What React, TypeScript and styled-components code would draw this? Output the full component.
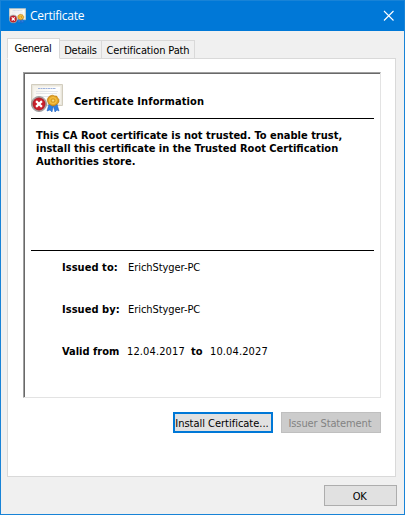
import React from "react";
import styled, { createGlobalStyle } from "styled-components";

const Global = createGlobalStyle`
  *, *::before, *::after { box-sizing: border-box; }
  body { margin: 0; font: 11px/13px "DejaVu Sans Condensed", "DejaVu Sans", sans-serif; font-stretch: condensed; color: #000; }
  button { font: inherit; font-stretch: inherit; color: inherit; }
`;

const Dialog = styled.main`
  width: 405px;
  height: 515px;
  border: 1px solid #1883d7;
  background: #f0f0f0;
  display: flex;
  flex-direction: column;
  overflow: hidden;
`;

const TitleBar = styled.header`
  height: 30px;
  flex: none;
  background: #0078d7;
  color: #fff;
  display: flex;
  align-items: center;
  padding: 0 9px 0 8px;
`;

const Title = styled.h1`
  flex: 1;
  margin: 0 0 0 4px;
  font: 400 12px/16px "Open Sans", "Noto Sans", sans-serif;
  letter-spacing: -0.25px;
`;

const CloseButton = styled.button`
  border: 0;
  padding: 0;
  background: none;
  display: flex;
  width: 12px;
  height: 12px;
`;

const Tabs = styled.nav`
  display: flex;
  align-items: flex-end;
  height: 21px;
  margin: 7px 0 -1px 6px;
  flex: none;
`;

const Tab = styled.button<{ $active?: boolean; $width: number }>`
  width: ${(p) => p.$width}px;
  height: ${(p) => (p.$active ? 21 : 19)}px;
  border: 1px solid #d9d9d9;
  border-left-width: ${(p) => (p.$active ? 1 : 0)}px;
  border-bottom-color: ${(p) => (p.$active ? "#fff" : "#d9d9d9")};
  background: ${(p) => (p.$active ? "#fff" : "#f0f0f0")};
  padding: ${(p) => (p.$active ? "0 1px 1px 0" : "2px 0 0 0")};
  white-space: nowrap;
  position: relative;
  display: flex;
  align-items: center;
  justify-content: center;
`;

const Text = styled.span<{ $track?: number; $bold?: boolean }>`
  letter-spacing: ${(p) => p.$track ?? 0}px;
  font-weight: ${(p) => (p.$bold ? 700 : 400)};
  white-space: nowrap;
`;

const Page = styled.section`
  width: 389px;
  height: 419px;
  margin-left: 6px;
  flex: none;
  border: 1px solid #d9d9d9;
  background: #fff;
  padding: 13px 14px 0 15px;
`;

const Sheet = styled.div`
  height: 326px;
  border: 1px solid #e3e3e3;
  border-top-color: #a0a0a0;
  border-left-color: #a0a0a0;
  box-shadow: inset 1px 1px 0 #696969;
  padding: 9px 6px 0 7px;
`;

const Heading = styled.div`
  height: 36px;
  display: flex;
  align-items: flex-start;
`;

const SheetIcon = styled.div`
  display: flex;
  margin-top: 2px;
`;

const HeadingText = styled.h2`
  margin: 13px 0 0 11px;
  font: inherit;
  font-stretch: inherit;
  display: flex;
`;

const Notice = styled.div`
  height: 133px;
  border: solid #000;
  border-width: 1px 0;
  padding: 10px 0 0 5px;
  display: flex;
  flex-direction: column;
`;

const Fields = styled.dl`
  margin: 10px 0 0 31px;
  display: flex;
  flex-direction: column;
  gap: 29px;
`;

const Field = styled.div`
  display: flex;
  height: 13px;
`;

const Term = styled.dt<{ $width: number }>`
  width: ${(p) => p.$width}px;
  display: flex;
`;

const Value = styled.dd<{ $width?: number }>`
  margin: 0;
  width: ${(p) => (p.$width ? `${p.$width}px` : "auto")};
  display: flex;
`;

const Actions = styled.div`
  display: flex;
  justify-content: flex-end;
  gap: 8px;
  margin-top: 14px;
`;

const PushButton = styled.button<{ $focused?: boolean; $width: number }>`
  width: ${(p) => p.$width}px;
  height: 21px;
  padding: 2px 2px 0 0;
  background: #e1e1e1;
  border: ${(p) => (p.$focused ? "2px solid #0078d7" : "1px solid #adadad")};
  display: flex;
  align-items: center;
  justify-content: center;
  &:disabled {
    background: #ccc;
    border-color: #bfbfbf;
    color: #838383;
  }
`;

const Footer = styled.footer`
  display: flex;
  justify-content: flex-end;
  padding: 8px 7px 0 0;
`;

function CertificateIcon({ width, height }: { width: number; height: number }) {
  return (
    <svg width={width} height={height} viewBox="0 0 32 29" aria-hidden="true">
      <defs>
        <linearGradient id="paper" x1="0" y1="0" x2="1" y2="1">
          <stop offset="0" stopColor="#f3f0e7" />
          <stop offset=".5" stopColor="#fff" />
          <stop offset="1" stopColor="#f0eee6" />
        </linearGradient>
        <radialGradient id="seal">
          <stop offset="0" stopColor="#fff0a0" />
          <stop offset=".3" stopColor="#d89a1c" />
          <stop offset=".55" stopColor="#f5c044" />
          <stop offset="1" stopColor="#d08a10" />
        </radialGradient>
      </defs>
      <path d="M.5.5h31v21H.5z" fill="#e9e6dc" stroke="#d2cdbe" />
      <path d="M2.5 2.5h27v17h-27z" fill="url(#paper)" stroke="#f3f0e8" />
      <path d="M7 4.5h18" stroke="#9eb3dc" strokeDasharray="2 .5" />
      <path d="M5 7.5h22M5 9.5h21M11 12.5h10" stroke="#d9dbe0" strokeWidth=".7" />
      <path d="M18 20l-2 7 3-1 2 2 1.5-7zM22 21l2 7 2-2 2 1-2-7z" fill="#2e7de0" stroke="#1b58b5" strokeWidth=".5" />
      <path d="M21.7 11.2l2 .7 2 .2 1 1.8 1.2 1.6v2l-.8 1.8-1.7 1.3-1.9 1.1-2 .2-1.9-.9-1.9-1-.9-1.9-.6-2 .7-2 1.2-1.7 1.8-.8z" fill="url(#seal)" stroke="#c17f0c" strokeWidth=".6" />
      <circle cx="8" cy="20" r="7.6" fill="#b9b9b9" stroke="#858585" strokeWidth=".7" />
      <circle cx="8" cy="20" r="6.2" fill="#c91f2a" stroke="#8f1c22" strokeWidth=".6" />
      <path d="M5.1 17.1l5.8 5.8m0-5.8l-5.8 5.8" stroke="#fff" strokeWidth="2.2" />
    </svg>
  );
}

const NOTICE = [
  { text: "This CA Root certificate is not trusted. To enable trust,", track: 0.01 },
  { text: "install this certificate in the Trusted Root Certification", track: 0 },
  { text: "Authorities store.", track: 0.06 },
];

export default function App() {
  return (
    <>
      <Global />
      <Dialog>
        <TitleBar>
          <CertificateIcon width={17} height={16} />
          <Title>Certificate</Title>
          <CloseButton aria-label="Close">
            <svg width="12" height="12" viewBox="0 0 12 12">
              <path d="M1 1l9.5 9.5M10.5 1L1 10.5" stroke="#fff" strokeWidth="1.1" />
            </svg>
          </CloseButton>
        </TitleBar>
        <Tabs>
          <Tab $active $width={53}><Text $track={-0.3}>General</Text></Tab>
          <Tab $width={42}><Text $track={-0.25}>Details</Text></Tab>
          <Tab $width={93}><Text $track={-0.12}>Certification Path</Text></Tab>
        </Tabs>
        <Page>
          <Sheet>
            <Heading>
              <SheetIcon><CertificateIcon width={32} height={29} /></SheetIcon>
              <HeadingText><Text $bold $track={0.1}>Certificate Information</Text></HeadingText>
            </Heading>
            <Notice>
              {NOTICE.map((line) => (
                <Text key={line.text} $bold $track={line.track}>{line.text}</Text>
              ))}
            </Notice>
            <Fields>
              <Field>
                <Term $width={66}><Text $bold $track={0.05}>Issued to:</Text></Term>
                <Value><Text $track={-0.06}>ErichStyger-PC</Text></Value>
              </Field>
              <Field>
                <Term $width={66}><Text $bold $track={0.05}>Issued by:</Text></Term>
                <Value><Text $track={-0.06}>ErichStyger-PC</Text></Value>
              </Field>
              <Field>
                <Term $width={65}><Text $bold>Valid from</Text></Term>
                <Value $width={64}><Text $track={0.12}>12.04.2017</Text></Value>
                <Term $width={19}><Text $bold>to</Text></Term>
                <Value><Text $track={0.12}>10.04.2027</Text></Value>
              </Field>
            </Fields>
          </Sheet>
          <Actions>
            <PushButton $focused $width={100}><Text $track={-0.02}>Install Certificate...</Text></PushButton>
            <PushButton disabled $width={100}><Text $track={-0.12}>Issuer Statement</Text></PushButton>
          </Actions>
        </Page>
        <Footer>
          <PushButton $width={73}><Text $track={-0.3}>OK</Text></PushButton>
        </Footer>
      </Dialog>
    </>
  );
}
